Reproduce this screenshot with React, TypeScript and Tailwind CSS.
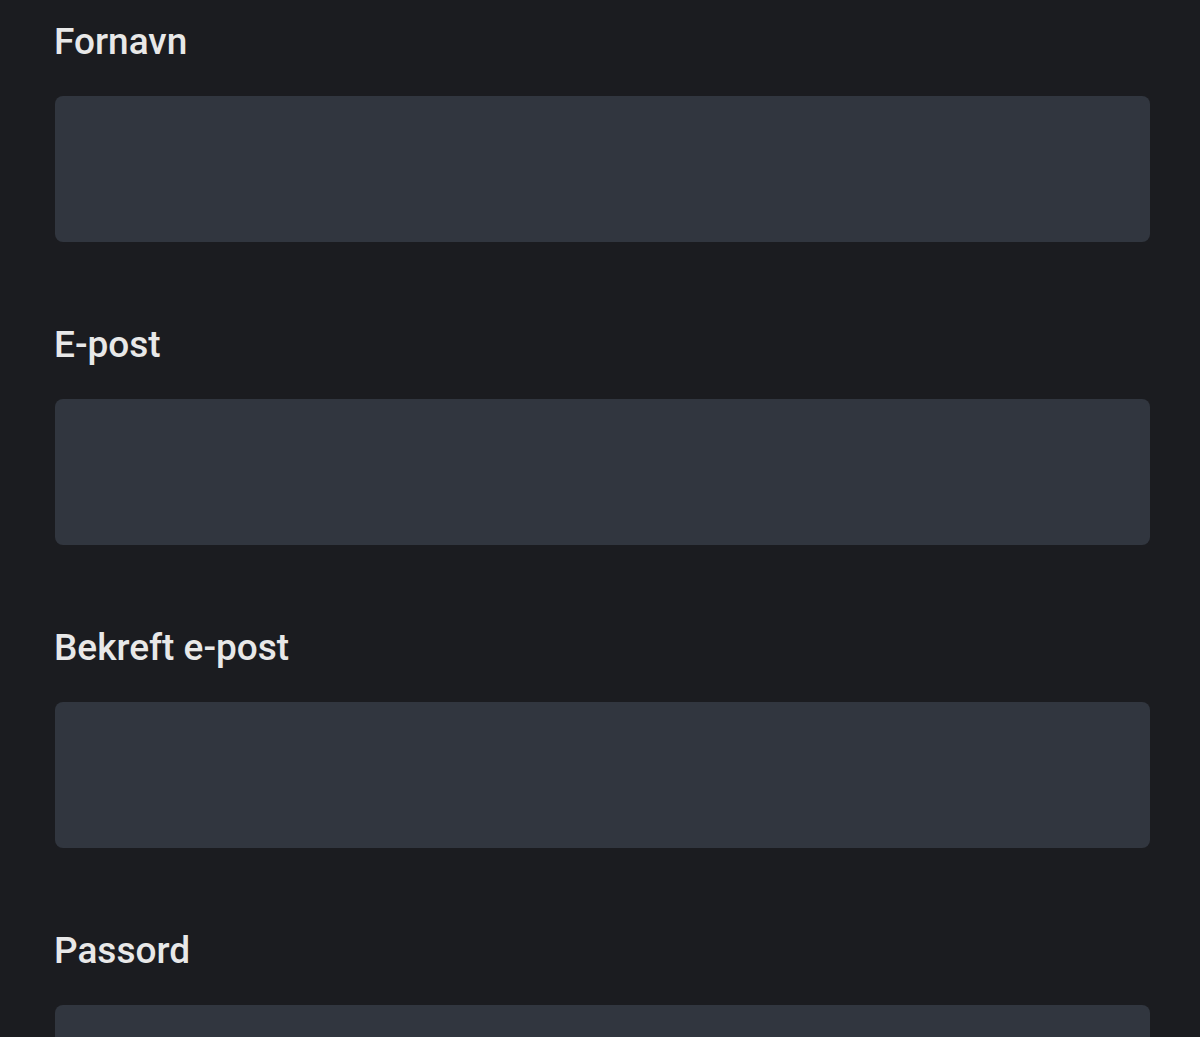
const FIELDS = ['Fornavn', 'E-post', 'Bekreft e-post', 'Passord'];

export default function App() {
  return (
    <div className="min-h-screen h-[1037px] overflow-hidden bg-[#1b1c20] pl-[55px] pr-[50px] pt-[18px]" style={{ fontFamily: 'Roboto, "Noto Sans", sans-serif' }}>
      <form className="flex flex-col gap-[79px]">
        {FIELDS.map((label) => (
          <div key={label} className="flex flex-col">
            <label className="text-[37px] leading-[48px] font-medium text-[#e8e8e8] -ml-px">{label}</label>
            <input
              type="text"
              className="mt-[30px] h-[146px] w-full rounded-[8px] bg-[#31363f] outline-none"
            />
          </div>
        ))}
      </form>
    </div>
  );
}
